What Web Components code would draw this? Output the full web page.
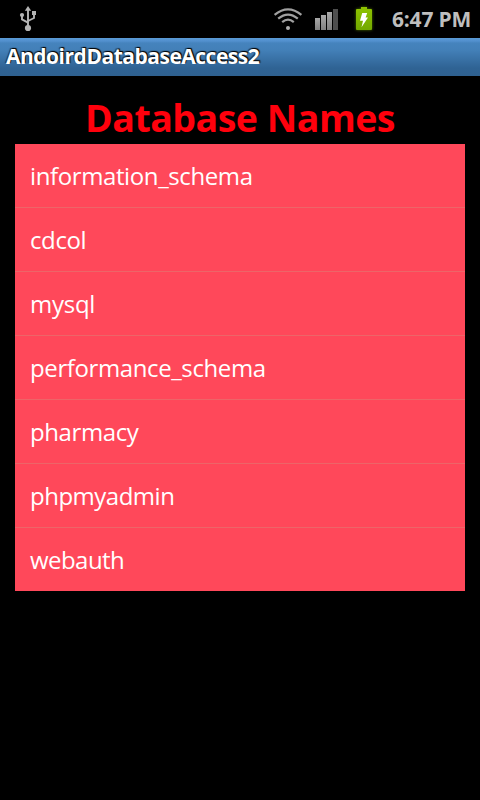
<!DOCTYPE html>
<html lang="en"><head><meta charset="utf-8"><title>AndoirdDatabaseAccess2</title>
<style>
html,body{margin:0;height:100%;background:#000}
body{font-family:"Open Sans","Noto Sans",sans-serif;overflow:hidden}
</style></head><body>
<phone-screen>
<status-bar slot="status">6:47 PM</status-bar>
<title-bar slot="title">AndoirdDatabaseAccess2</title-bar>
<page-heading>Database Names</page-heading>
<db-list>
<db-item>information_schema</db-item>
<db-item>cdcol</db-item>
<db-item style="--ls:-.25px">mysql</db-item>
<db-item>performance_schema</db-item>
<db-item>pharmacy</db-item>
<db-item style="--ls:-.5px">phpmyadmin</db-item>
<db-item style="--ls:-.55px">webauth</db-item>
</db-list>
</phone-screen>
<script>
const define=(name,html)=>customElements.define(name,class extends HTMLElement{
  constructor(){super();this.attachShadow({mode:'open'}).innerHTML=html;}
});
define('phone-screen',`<style>:host{display:flex;flex-direction:column;width:480px;height:800px;background:#000}main{padding:16px 15px 0}</style>
<slot name="status"></slot><slot name="title"></slot><main><slot></slot></main>`);
define('usb-icon',`<style>:host{display:block;width:20px;height:28px}svg{display:block}</style>
<svg width="20" height="28" fill="none" stroke="#b4b4b4" stroke-width="1.9"><path d="M10 22V4M10 16.7L4 13.4V9M10 15L16 12V8"/><g fill="#b4b4b4" stroke="none"><path d="M10 .1L13.2 4.8H6.8Z"/><circle cx="10" cy="22" r="3.1"/><circle cx="4" cy="9" r="2.1"/><path d="M14 5h4v4h-4z"/></g></svg>`);
define('wifi-icon',`<style>:host{display:block;width:30px;height:28px}svg{display:block}</style>
<svg width="30" height="28" fill="none" stroke="#a0a0a0" stroke-width="2.2"><path d="M1.6 8.8Q15 -2 28.4 8.8"/><path d="M5.2 12.7Q15 4.4 24.8 12.7"/><path d="M9.2 16.2Q15 11.2 20.8 16.2"/><circle cx="15" cy="22" r="2" fill="#b0b0b0" stroke="none"/></svg>`);
define('signal-icon',`<style>:host{display:block;width:24px;height:28px}svg{display:block}</style>
<svg width="24" height="28"><defs><linearGradient id="g" x2="0" y2="1"><stop stop-color="#a8a8a8"/><stop offset="1" stop-color="#808080"/></linearGradient></defs><g fill="url(#g)"><path d="M0 12h5v12H0z"/><path d="M6 9h5v15H6z"/><path d="M12 6h5v18h-5z"/></g><path fill="#4e4e4e" d="M18 3h5v21h-5z"/></svg>`);
define('battery-icon',`<style>:host{display:block;width:18px;height:28px}svg{display:block;overflow:visible;filter:drop-shadow(0 0 1.5px #4c7000)}</style>
<svg width="18" height="28"><defs><linearGradient id="g" x2="0" y2="1"><stop stop-color="#8fc400"/><stop offset="1" stop-color="#72a800"/></linearGradient></defs><path fill="url(#g)" d="M2 3H6V1H12V3H16Q17 3 17 4V23Q17 24 16 24H2Q1 24 1 23V4Q1 3 2 3Z"/><path fill="#fff" d="M7.2 7H12.2L10.6 11.6H13L6.5 21.3L8 14.8H5Z"/></svg>`);
define('status-bar',`<style>:host{display:flex;align-items:center;box-sizing:border-box;height:38px;padding:0 9px 0 18px;background:#000;color:#bebebe}
.fill{flex:1}wifi-icon{margin-right:12px}signal-icon{margin-right:16px}battery-icon{margin-right:19px}
usb-icon,wifi-icon,signal-icon,battery-icon{margin-top:2px}
.time{font-size:21px;font-weight:700;line-height:38px;width:79px;white-space:nowrap;letter-spacing:-.2px}</style>
<usb-icon></usb-icon><span class="fill"></span><wifi-icon></wifi-icon><signal-icon></signal-icon><battery-icon></battery-icon><span class="time"><slot></slot></span>`);
define('title-bar',`<style>:host{display:block;box-sizing:border-box;height:38px;padding-left:6px;font-size:21px;font-weight:700;line-height:36px;letter-spacing:-.49px;color:#fff;text-shadow:1px -1px 1px #000,-1px -1px 1px rgba(0,0,0,.5);background:linear-gradient(#5a9ad6 0,#5290ce 3px,#4583bd 5px,#4380b8 12px,#2f6394 30px,#2f6190 100%)}</style><slot></slot>`);
define('page-heading',`<style>:host{display:block;height:52px;text-align:center;font-size:37.5px;font-weight:700;line-height:52px;letter-spacing:-.5px;color:#ff000c;white-space:nowrap}</style><slot></slot>`);
define('db-list',`<style>:host{display:block;background:#ff485a}::slotted(db-item:not(:last-child)){border-bottom:1px solid #ed6568}</style><slot></slot>`);
define('db-item',`<style>:host{display:block;height:63px;padding-left:15px;font-size:24px;line-height:63px;color:#fff;letter-spacing:var(--ls,-.39px)}</style><slot></slot>`);
</script>
</body></html>
